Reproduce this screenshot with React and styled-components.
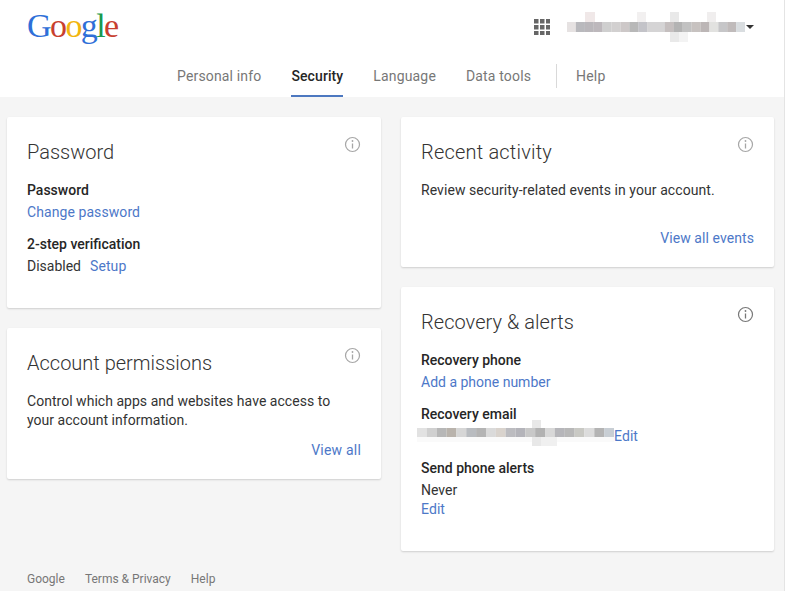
import React from "react";
import styled, { createGlobalStyle } from "styled-components";

const Global = createGlobalStyle`
  html, body { margin: 0; padding: 0; background: #fff; overflow: hidden; }
  body { font-family: Roboto, "Liberation Sans", sans-serif; font-size: 14px; color: #262626; }
  * { box-sizing: border-box; }
`;

const Page = styled.div`
  width: 785px;
  height: 591px;
  background: #f5f5f5;
  border-right: 1px solid #e4e4e4;
  overflow: hidden;
  display: flex;
  flex-direction: column;
`;
const Header = styled.header`
  height: 97px;
  background: #fff;
  display: flex;
  flex-direction: column;
`;
const TopBar = styled.div`
  height: 57px;
  padding: 0 30px 0 27px;
  display: flex;
  align-items: flex-start;
  justify-content: space-between;
`;
const Logo = styled.div`
  font-family: "Liberation Serif", serif;
  font-size: 34px;
  line-height: 34px;
  letter-spacing: -1.6px;
  margin-top: 9px;
`;
const LogoLetter = styled.span`
  color: ${p => p.$c};
`;
const Account = styled.div`
  display: flex;
  align-items: center;
  margin-top: 10px;
  height: 34px;
`;
const Apps = styled.svg`
  width: 16px;
  height: 16px;
  margin-right: 17px;
  display: block;
`;
const Caret = styled.div`
  width: 0;
  height: 0;
  margin-left: 1px;
  border-left: 4px solid transparent;
  border-right: 4px solid transparent;
  border-top: 4px solid #333;
`;
const Nav = styled.nav`
  display: flex;
  height: 40px;
  padding-left: 177px;
  align-items: stretch;
`;
const Tab = styled.a`
  height: 40px;
  padding-top: 10px;
  margin-right: ${p => p.$mr}px;
  line-height: 18px;
  font-size: 14px;
  letter-spacing: ${p => (p.$active ? 0.1 : 0.16)}px;
  color: ${p => (p.$active ? "#262626" : "#777")};
  font-weight: ${p => (p.$active ? 500 : 400)};
  border-bottom: 2px solid ${p => (p.$active ? "#4d78c0" : "transparent")};
`;
const Divider = styled.div`
  width: 1px;
  height: 24px;
  margin: 7px 19px 0 0;
  background: #d9d9d9;
`;
const Main = styled.main`
  flex: 1;
  display: grid;
  grid-template-columns: 374px 373px;
  column-gap: 20px;
  padding: 20px 0 0 7px;
  align-items: start;
`;
const Column = styled.div`
  display: flex;
  flex-direction: column;
  gap: 20px;
`;
const Card = styled.section`
  position: relative;
  height: ${p => p.$h}px;
  background: #fff;
  border-radius: 2px;
  padding: 22px 20px 0;
  box-shadow: 0 1px 2px rgba(0, 0, 0, 0.16);
`;
const Title = styled.h2`
  margin: 0 0 16px;
  font-size: 20px;
  line-height: 26px;
  font-weight: 300;
  letter-spacing: ${p => p.$ls || 0}px;
  color: #333;
`;
const InfoIcon = styled.svg`
  position: absolute;
  top: 19px;
  right: 20px;
  width: 17px;
  height: 17px;
  color: ${p => p.$c || "#a6a6a6"};
`;
const Label = styled.div`
  font-weight: 500;
  line-height: 19px;
  color: #262626;
`;
const Line = styled.div`
  line-height: 19px;
  margin-top: ${p => p.$mt || 0}px;
  margin-bottom: ${p => p.$mb || 0}px;
  color: #333;
  display: flex;
  align-items: center;
`;
const Text = styled.p`
  margin: 0;
  line-height: 19px;
  letter-spacing: ${p => p.$ls || 0.03}px;
  color: #333;
`;
const Link = styled.a`
  color: #4d78c8;
  letter-spacing: ${p => p.$ls ?? 0.08}px;
  margin-left: ${p => p.$ml || 0}px;
`;
const Action = styled.div`
  position: absolute;
  right: 20px;
  bottom: 19px;
  line-height: 19px;
  letter-spacing: ${p => p.$ls}px;
  color: #4d78c8;
`;
const Footer = styled.footer`
  display: flex;
  gap: 20px;
  height: 24px;
  padding-left: 27px;
  font-size: 12px;
  line-height: 16px;
  color: #777;
  align-items: center;
`;
const Mosaic = styled.svg`
  display: block;
  flex: none;
`;
const EmailBlur = styled.div`
  height: 19px;
  margin: -14px 0 0 -4px;
`;

const Info = ({ c }) => (
  <InfoIcon $c={c} viewBox="0 0 17 17" fill="none">
    <circle cx="8.5" cy="8.5" r="7" stroke="currentColor" strokeWidth="1.2" />
    <path d="M8.5 7.5v5" stroke="currentColor" strokeWidth="1.3" />
    <circle cx="8.5" cy="5" r="0.9" fill="currentColor" />
  </InfoIcon>
);

const accountBlocks = ["#e6e2e2","#b9b9bd","#bab7bb","#bdb8bc","#cfcfcf","#d2d0d0","#cdc8c8","#b8b8b8","#c3c3c8","#d5d4d5","#d5d4d5","#c5bfbf","#b3b3b3","#c2c2c2","#c7c2c0","#bcb6b6","#e2e2e0","#c6c6c8","#c0bbbb","#d9dde0"];
const emailBlocks = ["#e2e2e2","#d0d0d0","#b7b7b7","#b9b3ac","#d6d6d6","#b9bcc0","#b4b4b4","#dadada","#d9d3cd","#bcbcc0","#b4b4ba","#c8c8c8","#b2b2b2","#d8d8d8","#b6b6ba","#b8b8b8","#c9c9c4","#dcdcdc","#b4b4b4","#c8ced4"];

const AccountMosaic = () => (
  <Mosaic width="178" height="30" viewBox="0 0 178 30">
    <rect x="18" y="0" width="10" height="10" fill="#f0e8e8" />
    <rect x="70" y="0" width="9" height="10" fill="#f2f0f0" />
    <rect x="103" y="0" width="9" height="30" fill="#e9e9e9" />
    <rect x="112" y="20" width="9" height="10" fill="#f3f3f3" />
    <rect x="140" y="0" width="9" height="10" fill="#f0eeee" />
    {accountBlocks.map((c, i) => (
      <rect key={i} x={i * 8.9} y="10" width="9" height="10" fill={c} />
    ))}
  </Mosaic>
);

const EmailMosaic = () => (
  <Mosaic width="197" height="26" viewBox="0 0 197 26">
    <rect x="0" y="17" width="197" height="5" fill="#fafafa" />
    <rect x="115" y="0" width="9" height="26" fill="#e8e8e8" />
    <rect x="124" y="17" width="16" height="9" fill="#f0f0f0" />
    {emailBlocks.map((c, i) => (
      <rect key={i} x={i * 9.85} y="8" width="9.9" height="9" fill={c} />
    ))}
  </Mosaic>
);

const squares = [0, 1, 2].flatMap(r =>
  [0, 1, 2].map(c => <rect key={`${r}${c}`} x={c * 6} y={r * 6} width="4.5" height="4.5" fill="#666" />)
);

export default function App() {
  return (
    <>
      <Global />
      <Page>
        <Header>
          <TopBar>
            <Logo>
              <LogoLetter $c="#2f6fd8">G</LogoLetter>
              <LogoLetter $c="#c8402f">o</LogoLetter>
              <LogoLetter $c="#f2b50f">o</LogoLetter>
              <LogoLetter $c="#2f6fd8">g</LogoLetter>
              <LogoLetter $c="#1a9a50">l</LogoLetter>
              <LogoLetter $c="#c8402f">e</LogoLetter>
            </Logo>
            <Account>
              <Apps viewBox="0 0 16 16">{squares}</Apps>
              <AccountMosaic />
              <Caret />
            </Account>
          </TopBar>
          <Nav>
            <Tab $mr={30}>Personal info</Tab>
            <Tab $active $mr={30}>Security</Tab>
            <Tab $mr={30}>Language</Tab>
            <Tab $mr={25}>Data tools</Tab>
            <Divider />
            <Tab $mr={0}>Help</Tab>
          </Nav>
        </Header>
        <Main>
          <Column>
            <Card $h={191}>
              <Title>Password</Title>
              <Info />
              <Label>Password</Label>
              <Line $mt={3} $mb={13}><Link>Change password</Link></Line>
              <Label>2-step verification</Label>
              <Line $mt={3}>Disabled<Link $ml={9}>Setup</Link></Line>
            </Card>
            <Card $h={151}>
              <Title>Account permissions</Title>
              <Info />
              <Text>Control which apps and websites have access to<br />your account information.</Text>
              <Action $ls={0.2}>View all</Action>
            </Card>
          </Column>
          <Column>
            <Card $h={150}>
              <Title $ls={0.2}>Recent activity</Title>
              <Info />
              <Text $ls={0.07}>Review security-related events in your account.</Text>
              <Action $ls={0.08}>View all events</Action>
            </Card>
            <Card $h={264}>
              <Title $ls={0.05}>Recovery &amp; alerts</Title>
              <Info c="#777" />
              <Label>Recovery phone</Label>
              <Line $mt={3} $mb={13}><Link $ls={0}>Add a phone number</Link></Line>
              <Label>Recovery email</Label>
              <Line $mt={3} $mb={13}>
                <EmailBlur><EmailMosaic /></EmailBlur>
                <Link>Edit</Link>
              </Line>
              <Label>Send phone alerts</Label>
              <Line $mt={3}>Never</Line>
              <Line><Link>Edit</Link></Line>
            </Card>
          </Column>
        </Main>
        <Footer>
          <span>Google</span>
          <span>Terms &amp; Privacy</span>
          <span>Help</span>
        </Footer>
      </Page>
    </>
  );
}
